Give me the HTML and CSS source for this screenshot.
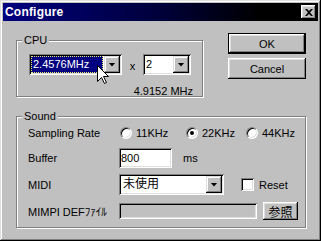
FILE: index.html
```html
<!DOCTYPE html>
<html lang="ja">
<head>
    <meta charset="UTF-8">
    <title>Configure</title>
    <link rel="stylesheet" href="styles.css">
</head>
<body>
    <div class="window">
        <div class="titlebar">
            <span class="title">Configure</span>
            <span class="close">
                <svg width="8" height="7" viewBox="0 0 8 7"><path d="M0 0h2l2 2 2-2h2L5 3.5 8 7H6L4 5 2 7H0l3-3.5z" fill="#000"/></svg>
            </span>
        </div>

        <div class="body">
            <div class="top">
                <div class="group cpu">
                    <span class="legend">CPU</span>
                    <div class="cpu-row">
                        <div class="combo cpu-clock">
                            <span class="value selected">2.4576MHz</span>
                            <span class="drop"></span>
                        </div>
                        <span class="times">x</span>
                        <div class="combo cpu-mult">
                            <span class="value">2</span>
                            <span class="drop"></span>
                        </div>
                    </div>
                    <div class="freq">4.9152 MHz</div>
                </div>

                <div class="buttons">
                    <button class="btn default">OK</button>
                    <button class="btn">Cancel</button>
                </div>
            </div>

            <div class="group sound">
                <span class="legend">Sound</span>
                <div class="rows">
                    <div class="row row-rate">
                        <span class="label">Sampling Rate</span>
                        <div class="opts">
                            <label class="opt"><span class="radio"></span>11KHz</label>
                            <label class="opt"><span class="radio checked"></span>22KHz</label>
                            <label class="opt"><span class="radio"></span>44KHz</label>
                        </div>
                    </div>
                    <div class="row row-buffer">
                        <span class="label">Buffer</span>
                        <input class="edit buffer" type="text" value="800">
                        <span class="unit">ms</span>
                    </div>
                    <div class="row row-midi">
                        <span class="label">MIDI</span>
                        <div class="combo midi">
                            <span class="value jp">未使用</span>
                            <span class="drop"></span>
                        </div>
                        <label class="check"><span class="checkbox"></span>Reset</label>
                    </div>
                    <div class="row row-file">
                        <span class="label">MIMPI DEFﾌｧｲﾙ</span>
                        <input class="edit file" type="text" disabled>
                        <button class="btn browse jp">参照</button>
                    </div>
                </div>
            </div>
        </div>

        <!-- mouse pointer over the clock combo -->
        <svg class="cursor" width="12" height="20" viewBox="0 0 12 20">
            <path d="M0.5 0.5V16.5L4.5 12.5L7.5 18.5L9.5 17.5L6.5 11.5H11.5Z" fill="#fff" stroke="#000" stroke-width="1"/>
        </svg>
    </div>
</body>
</html>
```

FILE: styles.css
```css
* {
    box-sizing: border-box;
}

body {
    margin: 0;
    font-family: "Liberation Sans", Arial, "Noto Sans CJK JP", sans-serif;
    font-size: 11px;
    color: #000;
    background: #c0c0c0;
}

.window {
    position: relative;
    width: 321px;
    height: 241px;
    padding: 3px;
    background: #c0c0c0;
    box-shadow: inset -1px -1px #000, inset 1px 1px #dfdfdf,
                inset -2px -2px #808080, inset 2px 2px #fff;
}

.titlebar {
    display: flex;
    align-items: center;
    justify-content: space-between;
    height: 18px;
    padding: 0 2px;
    background: linear-gradient(to right, #000080 0%, #00003a 50%, #000 82%);
}

.title {
    color: #fff;
    font-weight: bold;
    font-size: 12px;
    letter-spacing: 0.2px;
}

.close {
    display: flex;
    align-items: center;
    justify-content: center;
    width: 15px;
    height: 14px;
    background: #c0c0c0;
    box-shadow: inset -1px -1px #000, inset 1px 1px #fff,
                inset -2px -2px #808080, inset 2px 2px #dfdfdf;
}

.body {
    padding: 0 12px 0 13px;
}

.top {
    display: flex;
    justify-content: space-between;
    align-items: flex-start;
}

/* etched group box */
.group {
    display: flex;
    flex-direction: column;
    border: 1px solid #808080;
    box-shadow: inset 1px 1px #fff, 1px 1px #fff;
}

.legend {
    align-self: flex-start;
    margin: -7px 0 0 5px;
    padding: 0 2px;
    line-height: 13px;
    height: 13px;
    background: #c0c0c0;
}

.cpu {
    margin-top: 19px;
    width: 187px;
    height: 57px;
}

.cpu-row {
    display: flex;
    align-items: center;
    margin: 7px 0 0 12px;
}

.times {
    width: 21px;
    text-align: center;
    padding-top: 3px;
}

.freq {
    margin-top: 10px;
    padding-right: 9px;
    line-height: 12px;
    text-align: right;
}

/* combo box */
.combo {
    display: flex;
    height: 21px;
    padding: 2px;
    background: #fff;
    box-shadow: inset 1px 1px #808080, inset -1px -1px #fff,
                inset 2px 2px #000, inset -2px -2px #dfdfdf;
}

.combo .value {
    flex: 1;
    padding-left: 1px;
    line-height: 17px;
    white-space: nowrap;
    overflow: hidden;
}

.combo .value.selected {
    margin-right: 1px;
    padding-left: 1px;
    line-height: 15px;
    color: #fff;
    background: #000080;
    border: 1px dotted #e8e870;
}

.combo .jp {
    font-size: 12px;
    padding-left: 2px;
}

.drop {
    display: flex;
    align-items: center;
    justify-content: center;
    width: 16px;
    height: 17px;
    background: #c0c0c0;
    box-shadow: inset -1px -1px #000, inset 1px 1px #dfdfdf,
                inset -2px -2px #808080, inset 2px 2px #fff;
}

.drop::after {
    content: "";
    width: 7px;
    height: 4px;
    background: #000;
    clip-path: polygon(0 0, 100% 0, 50% 100%);
}

.cpu-clock { width: 93px; }
.cpu-mult { width: 48px; }
.midi { width: 105px; }

.buttons {
    display: flex;
    flex-direction: column;
    gap: 4px;
    margin-top: 12px;
    width: 78px;
}

.btn {
    height: 21px;
    padding: 0;
    border: none;
    font-family: inherit;
    font-size: 11px;
    color: #000;
    background: #c0c0c0;
    box-shadow: inset -1px -1px #000, inset 1px 1px #fff,
                inset -2px -2px #808080, inset 2px 2px #dfdfdf;
}

.btn.default {
    border: 1px solid #000;
}

.sound {
    margin-top: 19px;
    width: 290px;
    height: 112px;
}

.sound .legend {
    margin-bottom: -6px;
}

.rows {
    display: flex;
    flex-direction: column;
    padding: 6px 0 0 11px;
}

.row {
    display: flex;
    align-items: center;
}

.label {
    width: 91px;
    white-space: nowrap;
}

.row-rate { height: 20px; }
.row-buffer { height: 20px; margin-top: 5px; }
.row-midi { height: 21px; margin-top: 6px; }
.row-file { height: 18px; margin-top: 7px; }

.opts {
    display: grid;
    grid-template-columns: 66px 60px auto;
    margin-left: 1px;
}

.opt {
    display: flex;
    align-items: center;
    gap: 4px;
}

.radio {
    display: flex;
    align-items: center;
    justify-content: center;
    width: 12px;
    height: 12px;
    border-radius: 50%;
    background: #fff;
    border: 1px solid;
    border-color: #808080 #fff #fff #808080;
    box-shadow: inset 1px 1px #000, inset -1px -1px #dfdfdf;
}

.radio.checked::after {
    content: "";
    width: 4px;
    height: 4px;
    border-radius: 50%;
    background: #000;
}

.edit {
    margin: 0;
    padding: 0 2px;
    border: none;
    font-family: inherit;
    font-size: 11px;
    color: #000;
    background: #fff;
    box-shadow: inset 1px 1px #808080, inset -1px -1px #fff,
                inset 2px 2px #000, inset -2px -2px #dfdfdf;
    outline: none;
}

.buffer {
    width: 53px;
    height: 20px;
}

.unit {
    margin-left: 11px;
}

.check {
    display: flex;
    align-items: center;
    gap: 5px;
    margin-left: 17px;
}

.checkbox {
    width: 13px;
    height: 13px;
    background: #fff;
    box-shadow: inset 1px 1px #808080, inset -1px -1px #fff,
                inset 2px 2px #000, inset -2px -2px #dfdfdf;
}

.file {
    width: 138px;
    height: 16px;
    background: #c0c0c0;
}

.browse {
    width: 35px;
    height: 18px;
    margin-left: 6px;
    font-size: 12px;
}

.cursor {
    position: absolute;
    left: 97px;
    top: 65px;
}
```
